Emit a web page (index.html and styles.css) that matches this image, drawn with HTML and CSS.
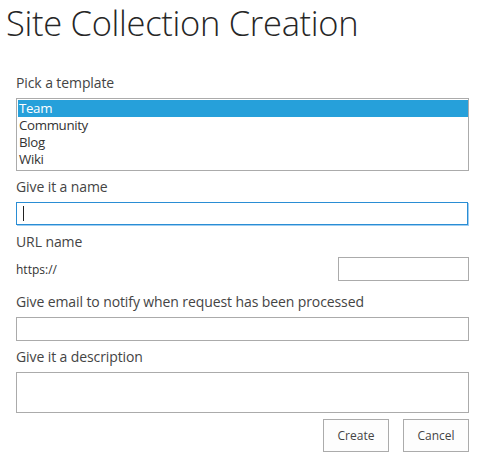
FILE: index.html
```html
<!DOCTYPE html>
<html>
<head>
<meta charset="utf-8">
<link rel="stylesheet" href="styles.css">
</head>
<body>
<div class="page">
  <h1 class="title">Site Collection Creation</h1>
  <form class="form">
    <label class="label">Pick a template</label>
    <div class="listbox">
      <div class="option selected">Team</div>
      <div class="option">Community</div>
      <div class="option">Blog</div>
      <div class="option">Wiki</div>
    </div>
    <label class="label">Give it a name</label>
    <div class="input focused"><span class="caret"></span></div>
    <label class="label">URL name</label>
    <div class="url-row">
      <span class="prefix">https://</span>
      <div class="input small"></div>
    </div>
    <label class="label">Give email to notify when request has been processed</label>
    <div class="input"></div>
    <label class="label">Give it a description</label>
    <div class="textarea"></div>
    <div class="actions">
      <button type="button" class="btn">Create</button>
      <button type="button" class="btn">Cancel</button>
    </div>
  </form>
</div>
</body>
</html>
```
FILE: styles.css
```css
html, body {
  margin: 0;
  padding: 0;
  background: #fff;
}
body {
  font-family: "Open Sans", "Noto Sans", "Liberation Sans", sans-serif;
  color: #444;
}
.page {
  width: 500px;
}
.title {
  margin: 0;
  padding: 0 0 0 6px;
  height: 73px;
  font-weight: 300;
  font-size: 34.5px;
  line-height: 46px;
  color: #262626;
  letter-spacing: -0.3px;
}
.form {
  display: flex;
  flex-direction: column;
  padding: 0 31px 0 16px;
}
.label {
  display: block;
  font-size: 14px;
  line-height: 20px;
  height: 20px;
  margin-bottom: 5px;
  color: #444;
  letter-spacing: -0.1px;
}
.listbox {
  border: 1px solid #ababab;
  padding: 1px 0 0 1px;
  box-sizing: border-box;
  height: 73px;
  margin-bottom: 6px;
  display: flex;
  flex-direction: column;
}
.option {
  height: 17px;
  line-height: 17px;
  font-size: 13.3px;
  padding-left: 1px;
  color: #333;
  letter-spacing: -0.35px;
}
.option.selected {
  background: #26a0da;
  color: #fff;
}
.input {
  height: 24px;
  box-sizing: border-box;
  border: 1px solid #ababab;
  margin-bottom: 6px;
  display: flex;
  align-items: center;
}
.input.focused {
  border-color: #2a8dd4;
  margin-right: 1px;
  box-shadow: 1px 1px 0 #9fcef2;
  height: 23px;
  margin-bottom: 7px;
}
.caret {
  width: 1px;
  height: 15px;
  background: #222;
  margin-left: 6px;
}
.url-row {
  display: flex;
  align-items: center;
  justify-content: space-between;
  margin-bottom: 11px;
}
.prefix {
  font-size: 12px;
  color: #333;
}
.input.small {
  width: 131px;
  margin-bottom: 0;
}
.textarea {
  height: 41px;
  box-sizing: border-box;
  border: 1px solid #ababab;
  margin-bottom: 6px;
}
.actions {
  display: flex;
  justify-content: flex-end;
  gap: 14px;
}
.btn {
  width: 66px;
  height: 33px;
  box-sizing: border-box;
  border: 1px solid #ababab;
  background: #fdfdfd;
  font-family: inherit;
  font-size: 12px;
  color: #444;
  padding: 0;
}
```
